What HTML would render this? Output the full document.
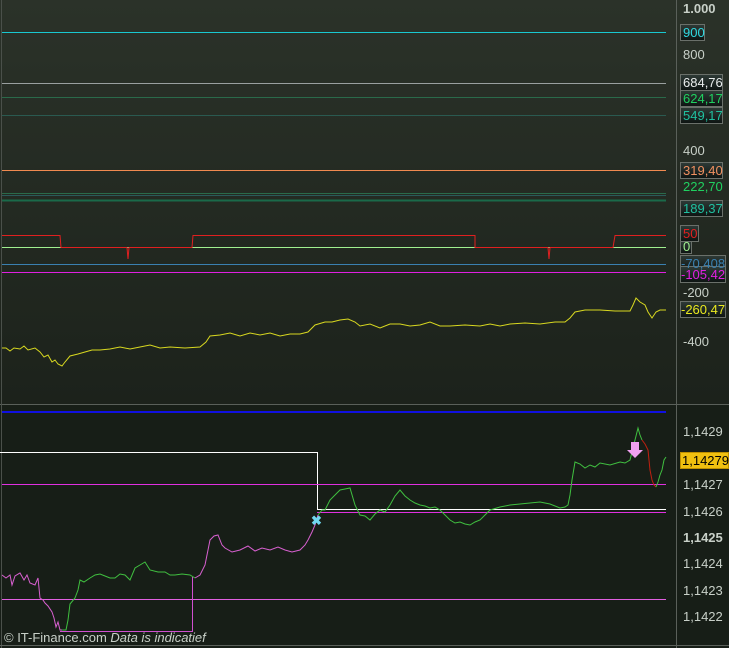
<!DOCTYPE html>
<html><head><style>
body{margin:0;width:729px;height:648px;overflow:hidden;background:#1a2019;font-family:"Liberation Sans",sans-serif}
svg{display:block}
text{font-family:"Liberation Sans",sans-serif;font-size:13px}
</style></head><body>
<svg width="729" height="648" xmlns="http://www.w3.org/2000/svg">
<defs>
<linearGradient id="g1" x1="0" y1="0" x2="0" y2="1"><stop offset="0" stop-color="#2b3229"/><stop offset="1" stop-color="#1c221b"/></linearGradient>
<linearGradient id="lb" x1="0" y1="0" x2="0" y2="1"><stop offset="0" stop-color="#2e3a36"/><stop offset="1" stop-color="#0d1412"/></linearGradient>
</defs>
<rect width="729" height="404" fill="url(#g1)"/>
<rect y="404" width="729" height="244" fill="#171e17"/>
<line x1="0" y1="404.5" x2="729" y2="404.5" stroke="#5a605a"/>
<line x1="676.5" y1="0" x2="676.5" y2="648" stroke="#5a605a"/>
<line x1="1.5" y1="0" x2="1.5" y2="648" stroke="#4a504a"/>
<line x1="0" y1="645.5" x2="729" y2="645.5" stroke="#5a605a"/>
<g stroke-width="1" fill="none">
<line x1="2" y1="32.5" x2="666" y2="32.5" stroke="#19c8d0"/>
<line x1="2" y1="83.5" x2="666" y2="83.5" stroke="#9aa0a0"/>
<line x1="2" y1="97.5" x2="666" y2="97.5" stroke="#2a6a4a"/>
<line x1="2" y1="115.5" x2="666" y2="115.5" stroke="#2a5a50"/>
<line x1="2" y1="170.5" x2="666" y2="170.5" stroke="#f08a50"/>
<line x1="2" y1="193.5" x2="666" y2="193.5" stroke="#2a6a4a"/>
<line x1="2" y1="195.5" x2="666" y2="195.5" stroke="#2a5a5a"/>
<line x1="2" y1="200.5" x2="666" y2="200.5" stroke="#1a6a4a" stroke-width="2"/>
<line x1="2" y1="247.5" x2="666" y2="247.5" stroke="#a0f090"/>
<polyline points="2,235.5 60,235.5 61,247.5 127,247.5 128,259 129,247.5 192,247.5 193,235.5 475,235.5 475,247.5 548,247.5 549,259 550,247.5 613,247.5 615,235.5 666,235.5" stroke="#e02020"/>
<line x1="2" y1="264.5" x2="666" y2="264.5" stroke="#3a80b0"/>
<line x1="2" y1="272.5" x2="666" y2="272.5" stroke="#e020e0"/>
<polyline stroke="#d8d820" points="2,348 6,348 10,351 14,348 20,349 24,346 28,350 35,348 40,352 44,357 48,355 52,362 55,360 58,364 62,366 65,362 70,356 78,354 85,352 92,350 100,350 110,349 120,347 130,349 140,347 150,345 160,348 170,347 185,348 200,347 206,342 210,336 220,335 230,333 240,336 250,333 260,335 270,333 280,336 290,334 300,334 308,332 315,325 325,322 332,322 340,320 348,319 355,322 360,326 370,324 380,328 390,324 400,324 410,326 420,325 430,322 440,326 450,326 465,325 480,326 490,324 500,326 510,324 525,323 540,324 555,322 565,322 570,318 575,312 585,310 600,310 615,311 630,311 633,305 636,298 640,302 645,305 648,312 652,318 656,312 660,310 666,310"/>
<line x1="2" y1="412" x2="666" y2="412" stroke="#1010e0" stroke-width="2"/>
<polyline points="0,452.5 317.5,452.5 317.5,509.5 666,509.5" stroke="#ffffff"/>
<line x1="2" y1="484.5" x2="666" y2="484.5" stroke="#e030e0"/>
<line x1="317" y1="512.5" x2="666" y2="512.5" stroke="#e030e0"/>
<line x1="2" y1="599.5" x2="666" y2="599.5" stroke="#e060e0"/>
<polyline points="60,631.5 192.5,631.5 192.5,577" stroke="#d050d0"/>
<polyline stroke="#d860d0" points="2,575 6,578 10,575 12,585 15,576 20,573 24,580 27,575 30,583 35,585 38,578 40,598 43,600 45,603 48,606 52,612 54,618 56,627 58,622 60,630 62,630"/>
<polyline stroke="#40c040" points="62,630 66,630 68,620 70,604 75,598 78,590 80,580 84,582 90,578 95,575 100,574 105,576 110,578 115,578 120,574 125,575 130,580 135,568 140,565 145,562 150,570 158,572 165,572 170,575 175,575 182,574 190,575 195,578"/>
<polyline stroke="#d860d0" points="195,578 200,575 205,565 208,550 210,540 214,536 218,535 222,545 225,548 232,552 240,550 248,546 255,551 262,548 270,550 278,547 285,550 292,552 300,550 305,545 308,540 312,532 315,525 318,515"/>
<polyline stroke="#40c040" points="318,515 322,510 325,510 330,500 335,495 340,490 345,489 350,488 355,505 360,515 365,516 370,520 375,514 380,510 385,512 390,505 395,496 400,490 405,496 410,500 415,503 420,505 425,506 430,508 435,507 440,510 445,515 450,520 455,523 460,522 465,524 470,525 475,522 480,520 485,515 490,510 500,507 510,505 520,504 530,503 540,502 550,504 560,508 565,507 568,505 570,495 572,480 575,462 580,464 585,468 590,465 595,467 600,463 610,465 620,462 625,463 630,460 633,448 635,440 638,428 640,435 642,440"/>
<polyline stroke="#c02010" points="642,440 645,444 648,450 650,470 652,480 654,485 656,487"/>
<polyline stroke="#40c040" points="656,487 658,482 660,475 662,470 664,460 666,457"/>
</g>
<path d="M631,442h8v8h4l-8,8l-8,-8h4z" fill="#f0a0f0"/>
<text x="311" y="525" fill="#70d8f0" font-size="16" font-weight="bold">✖</text>
<g fill="#c8d0c8">
<text x="683" y="13" font-weight="bold" font-size="14">1.000</text>
<text x="683" y="59">800</text>
<text x="683" y="155">400</text>
<text x="683" y="297">-200</text>
<text x="683" y="346">-400</text>
<text x="683" y="436">1,1429</text>
<text x="683" y="489">1,1427</text>
<text x="683" y="516">1,1426</text>
<text x="683" y="542" font-weight="bold">1,1425</text>
<text x="683" y="568">1,1424</text>
<text x="683" y="595">1,1423</text>
<text x="683" y="621">1,1422</text>
</g>
<g stroke="#6a706a" fill="url(#lb)">
<rect x="680.5" y="24.5" width="24" height="16"/>
<rect x="680.5" y="74.5" width="42" height="16"/>
<rect x="680.5" y="90.5" width="42" height="16"/>
<rect x="680.5" y="107.5" width="42" height="16"/>
<rect x="680.5" y="162.5" width="42" height="16"/>
<rect x="680.5" y="200.5" width="42" height="16"/>
<rect x="680.5" y="225.5" width="18" height="16"/>
<rect x="680.5" y="241.5" width="11" height="12"/>
<rect x="680.5" y="255.5" width="45" height="16"/>
<rect x="680.5" y="266.5" width="45" height="16"/>
<rect x="680.5" y="301.5" width="45" height="16"/>
</g>
<text x="683" y="37" fill="#30d8e0">900</text>
<text x="683" y="87" fill="#e8ecec">684,76</text>
<text x="683" y="103" fill="#20d060">624,17</text>
<text x="683" y="120" fill="#20c0a0">549,17</text>
<text x="683" y="175" fill="#f09060">319,40</text>
<text x="683" y="191" fill="#20d060">222,70</text>
<text x="683" y="213" fill="#20c0a0">189,37</text>
<text x="683" y="238" fill="#e02020">50</text>
<text x="683" y="251" fill="#a0f090">0</text>
<text x="681" y="268" fill="#3a80b0">-70,408</text>
<text x="681" y="279" fill="#e020e0">-105,42</text>
<text x="681" y="314" fill="#e8e820">-260,47</text>
<rect x="680.5" y="452.5" width="48" height="16" fill="#f0c010" stroke="#c09000"/>
<text x="682" y="465" fill="#000">1,14279</text>
<text x="4" y="642" fill="#c8d0c8" font-size="12">© IT-Finance.com  <tspan font-style="italic">Data is indicatief</tspan></text>
</svg>
</body></html>
